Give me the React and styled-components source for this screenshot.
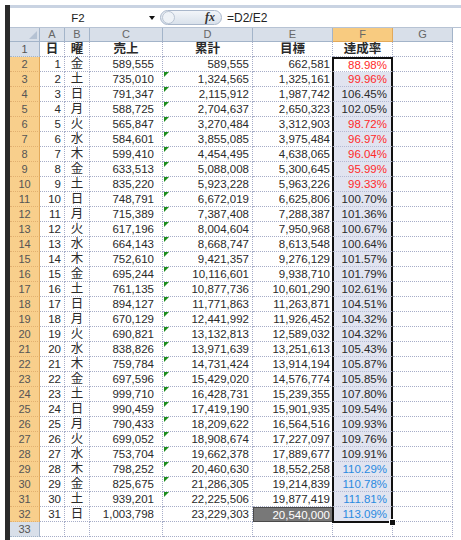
import React from "react";
import styled, { createGlobalStyle } from "styled-components";

const GlobalStyle = createGlobalStyle`
  body {
    margin: 0;
    background: #ffffff;
    font-family: "Liberation Sans", "Noto Sans CJK JP", sans-serif;
  }
`;

const rows = [
  [1, "金", "589,555", "589,555", "662,581", "88.98%"],
  [2, "土", "735,010", "1,324,565", "1,325,161", "99.96%"],
  [3, "日", "791,347", "2,115,912", "1,987,742", "106.45%"],
  [4, "月", "588,725", "2,704,637", "2,650,323", "102.05%"],
  [5, "火", "565,847", "3,270,484", "3,312,903", "98.72%"],
  [6, "水", "584,601", "3,855,085", "3,975,484", "96.97%"],
  [7, "木", "599,410", "4,454,495", "4,638,065", "96.04%"],
  [8, "金", "633,513", "5,088,008", "5,300,645", "95.99%"],
  [9, "土", "835,220", "5,923,228", "5,963,226", "99.33%"],
  [10, "日", "748,791", "6,672,019", "6,625,806", "100.70%"],
  [11, "月", "715,389", "7,387,408", "7,288,387", "101.36%"],
  [12, "火", "617,196", "8,004,604", "7,950,968", "100.67%"],
  [13, "水", "664,143", "8,668,747", "8,613,548", "100.64%"],
  [14, "木", "752,610", "9,421,357", "9,276,129", "101.57%"],
  [15, "金", "695,244", "10,116,601", "9,938,710", "101.79%"],
  [16, "土", "761,135", "10,877,736", "10,601,290", "102.61%"],
  [17, "日", "894,127", "11,771,863", "11,263,871", "104.51%"],
  [18, "月", "670,129", "12,441,992", "11,926,452", "104.32%"],
  [19, "火", "690,821", "13,132,813", "12,589,032", "104.32%"],
  [20, "水", "838,826", "13,971,639", "13,251,613", "105.43%"],
  [21, "木", "759,784", "14,731,424", "13,914,194", "105.87%"],
  [22, "金", "697,596", "15,429,020", "14,576,774", "105.85%"],
  [23, "土", "999,710", "16,428,731", "15,239,355", "107.80%"],
  [24, "日", "990,459", "17,419,190", "15,901,935", "109.54%"],
  [25, "月", "790,433", "18,209,622", "16,564,516", "109.93%"],
  [26, "火", "699,052", "18,908,674", "17,227,097", "109.76%"],
  [27, "水", "753,704", "19,662,378", "17,889,677", "109.91%"],
  [28, "木", "798,252", "20,460,630", "18,552,258", "110.29%"],
  [29, "金", "825,675", "21,286,305", "19,214,839", "110.78%"],
  [30, "土", "939,201", "22,225,506", "19,877,419", "111.81%"],
  [31, "日", "1,003,798", "23,229,303", "20,540,000", "113.09%"],
];

function rateColor(text) {
  const v = parseFloat(text);
  if (v < 100) return "#ff2a2a";
  if (v >= 110) return "#2a8ae0";
  return "#2a2a2a";
}

function App() {
  return (
    <>
      <GlobalStyle />
      <Frame>
        <LeftStrip />
        <Main>
          <TopBand />
          <FormulaBar>
            <NameBox>
              <span>F2</span>
              <DropArrow />
            </NameBox>
            <FxPill>
              <FxKnob />
              <FxLabel>fx</FxLabel>
            </FxPill>
            <FormulaText>=D2/E2</FormulaText>
          </FormulaBar>
          <Sheet>
            <Corner>
              <CornerMark />
            </Corner>
            {["A", "B", "C", "D", "E", "F", "G"].map((c) => (
              <ColHead key={c} $active={c === "F"}>
                {c}
              </ColHead>
            ))}
            <Blank />

            <RowHead>1</RowHead>
            <Cell $align="center" $bold>日</Cell>
            <Cell $align="center" $bold>曜</Cell>
            <Cell $align="center" $bold>売上</Cell>
            <Cell $align="center" $bold>累計</Cell>
            <Cell $align="center" $bold>目標</Cell>
            <Cell $align="center" $bold>達成率</Cell>
            <Cell />
            <Blank />

            {rows.map((r, i) => {
              const n = i + 2;
              const first = n === 2;
              const last = n === 32;
              return (
                <React.Fragment key={n}>
                  <RowHead $active>{n}</RowHead>
                  <Cell $align="right" $pad={3}>{r[0]}</Cell>
                  <Cell $align="center" $jp>{r[1]}</Cell>
                  <Cell $align="right" $pad={8}>{r[2]}</Cell>
                  <Cell $align="right" $pad={3} $flag={n >= 3 && n <= 31}>
                    {r[3]}
                  </Cell>
                  <Cell $align="right" $pad={2} $dark={last}>
                    {r[4]}
                  </Cell>
                  <RateCell
                    $first={first}
                    $last={last}
                    style={{ color: rateColor(r[5]) }}
                  >
                    {r[5]}
                  </RateCell>
                  <Cell />
                  <Blank />
                </React.Fragment>
              );
            })}

            <RowHead>33</RowHead>
            <Cell />
            <Cell />
            <Cell />
            <Cell />
            <Cell />
            <Cell />
            <Cell />
            <Blank />
          </Sheet>
        </Main>
      </Frame>
    </>
  );
}

const Frame = styled.div`
  display: flex;
  padding: 5px 0 0 5px;
  width: 461px;
  height: 540px;
  box-sizing: border-box;
  overflow: hidden;
`;

const LeftStrip = styled.div`
  width: 5px;
  flex: none;
  background: #2b2b2b;
`;

const Main = styled.div`
  flex: 1;
  display: flex;
  flex-direction: column;
`;

const TopBand = styled.div`
  height: 3px;
  background: #c9d3e2;
`;

const FormulaBar = styled.div`
  height: 20px;
  display: flex;
  align-items: center;
  background: #ffffff;
  box-sizing: border-box;
  border-bottom: 1px solid #b7c3d4;
`;

const NameBox = styled.div`
  width: 148px;
  height: 100%;
  display: flex;
  align-items: center;
  justify-content: center;
  padding-right: 12px;
  box-sizing: border-box;
  position: relative;
  font-size: 11.5px;
  color: #222;
`;

const DropArrow = styled.div`
  position: absolute;
  right: 3px;
  top: 8px;
  width: 0;
  height: 0;
  border-left: 3px solid transparent;
  border-right: 3px solid transparent;
  border-top: 4px solid #111;
`;

const FxPill = styled.div`
  width: 62px;
  height: 15px;
  margin-left: 2px;
  border-radius: 8px;
  border: 1px solid #a9b7cb;
  background: linear-gradient(#f2f5f9, #d9e1eb);
  display: flex;
  align-items: center;
  justify-content: space-between;
  padding-right: 6px;
  box-sizing: border-box;
`;

const FxKnob = styled.div`
  width: 11px;
  height: 11px;
  margin-left: 1px;
  border-radius: 50%;
  border: 1px solid #b9c4d3;
  background: #eef2f7;
`;

const FxLabel = styled.span`
  font-family: "Liberation Serif", serif;
  font-style: italic;
  font-weight: bold;
  font-size: 12px;
  color: #333;
`;

const FormulaText = styled.div`
  margin-left: 5px;
  font-size: 12px;
  color: #222;
`;

const Sheet = styled.div`
  display: grid;
  grid-template-columns: 30px 25px 25px 73px 90px 80px 60px 60px 1fr;
  grid-template-rows: 14px;
  grid-auto-rows: 15px;
`;

const Corner = styled.div`
  background: #d8dfe9;
  border-right: 1px solid #a3b4c9;
  border-bottom: 1px solid #a3b4c9;
  box-sizing: border-box;
  position: relative;
`;

const CornerMark = styled.div`
  position: absolute;
  right: 2px;
  bottom: 2px;
  width: 0;
  height: 0;
  border-left: 8px solid transparent;
  border-bottom: 8px solid #b5c2d3;
`;

const ColHead = styled.div`
  background: ${(p) => (p.$active ? "#f8cb80" : "#d8dfe9")};
  border-right: 1px solid ${(p) => (p.$active ? "#e2a95a" : "#a3b4c9")};
  border-bottom: 1px solid ${(p) => (p.$active ? "#e2a95a" : "#a3b4c9")};
  box-sizing: border-box;
  color: #666;
  font-size: 11px;
  line-height: 13px;
  text-align: center;
`;

const RowHead = styled.div`
  background: ${(p) => (p.$active ? "#f8cf8c" : "#d8dfe9")};
  border-right: 1px solid ${(p) => (p.$active ? "#e2a95a" : "#a3b4c9")};
  border-bottom: 1px dotted ${(p) => (p.$active ? "#e2b070" : "#a3b4c9")};
  box-sizing: border-box;
  color: #555;
  font-size: 11px;
  line-height: 14px;
  text-align: center;
`;

const Cell = styled.div`
  position: relative;
  box-sizing: border-box;
  border-right: 1px dotted #a6adc8;
  border-bottom: 1px dotted #a6adc8;
  padding: 0 ${(p) => p.$pad || 0}px 0 0;
  text-align: ${(p) => p.$align || "left"};
  font-size: ${(p) => (p.$bold || p.$jp ? "12.5px" : "11.5px")};
  font-weight: ${(p) => (p.$bold ? "bold" : "normal")};
  line-height: 14px;
  color: ${(p) => (p.$dark ? "#ffffff" : "#2a2a2a")};
  background: ${(p) => (p.$dark ? "#787878" : "transparent")};
  ${(p) => p.$dark && "border: 1px solid #4a4a4a;"}
  white-space: nowrap;
  overflow: hidden;

  &::before {
    content: "";
    display: ${(p) => (p.$flag ? "block" : "none")};
    position: absolute;
    left: 1px;
    top: 0;
    width: 0;
    height: 0;
    border-top: 5px solid #1c8c1c;
    border-right: 5px solid transparent;
  }
`;

const RateCell = styled.div`
  position: relative;
  box-sizing: border-box;
  margin-left: -1px;
  padding-right: 4px;
  text-align: right;
  font-size: 11.5px;
  line-height: ${(p) => (p.$first ? "13px" : "14px")};
  white-space: nowrap;
  background: ${(p) => (p.$first ? "#ffffff" : "#e1e4f0")};
  border-left: 2px solid #111;
  border-right: 2px solid #111;
  border-top: ${(p) => (p.$first ? "2px solid #111" : "none")};
  border-bottom: ${(p) => (p.$last ? "2px solid #111" : "1px dotted #b3b9d3")};
  margin-bottom: ${(p) => (p.$last ? "-1px" : "0")};
  z-index: 1;

  &::after {
    content: "";
    display: ${(p) => (p.$last ? "block" : "none")};
    position: absolute;
    right: -5px;
    bottom: -5px;
    width: 5px;
    height: 5px;
    background: #111;
    border: 1px solid #fff;
  }
`;

const Blank = styled.div`
  background: #ffffff;
`;

export default App;
